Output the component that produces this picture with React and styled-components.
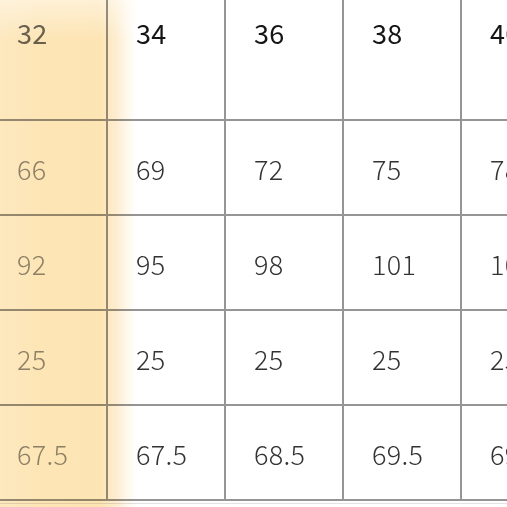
import React from "react";
import styled, { createGlobalStyle } from "styled-components";

const Global = createGlobalStyle`
  html, body { margin: 0; padding: 0; background: #ffffff; }
  body { width: 507px; height: 507px; overflow: hidden; }
`;

const Page = styled.div`
  position: relative;
  width: 507px;
  height: 507px;
  overflow: hidden;
  background: #fff;
  font-family: "Noto Sans CJK SC", "Noto Sans", sans-serif;
`;

const Grid = styled.div`
  display: grid;
  grid-template-columns: repeat(5, 118px);
  grid-auto-rows: 95px;
  grid-template-rows: 121px;
  margin-left: -10px;
  width: max-content;
  border-bottom: 1px solid #e3e3e3;
  padding-bottom: 2px;
`;

const Cell = styled.div`
  box-sizing: border-box;
  border-right: 2px solid #959595;
  border-bottom: 2px solid #959595;
  padding-left: ${(p) => (p.$first ? "27px" : "28px")};
  padding-top: ${(p) => (p.$head ? "13px" : "2px")};
  display: flex;
  align-items: ${(p) => (p.$head ? "flex-start" : "center")};
  font-size: 27px;
  line-height: 40px;
  letter-spacing: 0.3px;
  font-weight: ${(p) => (p.$head ? 400 : 300)};
  color: ${(p) =>
    p.$first ? (p.$head ? "#6a6a6a" : "#8e8e8e") : p.$head ? "#151515" : "#333333"};
  white-space: nowrap;
`;

const Glow = styled.div`
  position: absolute;
  left: 0;
  top: 0;
  width: 140px;
  height: 507px;
  pointer-events: none;
  mix-blend-mode: multiply;
  background: linear-gradient(
    to right,
    #fde8bf 0px,
    #fde5b5 40px,
    #fde4b3 100px,
    #fdedcf 116px,
    #fff8ec 127px,
    rgba(255, 255, 255, 0) 137px
  );
  -webkit-mask-image: linear-gradient(to bottom, rgba(0,0,0,0.55) 0px, #000 40px);
  mask-image: linear-gradient(to bottom, rgba(0,0,0,0.55) 0px, #000 40px);
`;

const rows = [
  ["32", "34", "36", "38", "40"],
  ["66", "69", "72", "75", "78"],
  ["92", "95", "98", "101", "104"],
  ["25", "25", "25", "25", "25"],
  ["67.5", "67.5", "68.5", "69.5", "69.5"],
];

export default function App() {
  return (
    <Page>
      <Global />
      <Grid>
        {rows.map((r, ri) =>
          r.map((v, ci) => (
            <Cell key={`${ri}-${ci}`} $head={ri === 0} $first={ci === 0}>
              {v}
            </Cell>
          ))
        )}
      </Grid>
      <Glow />
    </Page>
  );
}
